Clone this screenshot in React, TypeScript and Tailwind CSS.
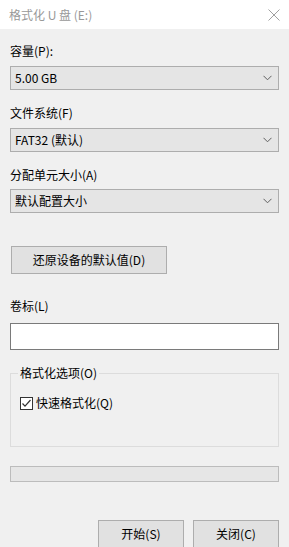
import { useState } from "react";

const FONT = { fontFamily: '"Noto Sans CJK SC", "Noto Sans", sans-serif' };

function Chevron() {
  return (
    <svg width="9" height="6" viewBox="0 0 9 6" fill="none" stroke="#606060" strokeWidth={1}>
      <polyline points="0.5,0.8 4.5,4.8 8.5,0.8" />
    </svg>
  );
}

function Combo({ value }: { value: string }) {
  return (
    <div className="flex h-[24px] items-center justify-between border border-[#adadad] bg-[#e5e5e5] pl-[4px] pr-[6px] text-[12px] text-black">
      <span>{value}</span>
      <Chevron />
    </div>
  );
}

export default function App() {
  const [quick, setQuick] = useState(true);

  return (
    <div className="flex h-[547px] w-[289px] flex-col overflow-hidden bg-[#f0f0f0] text-[12px] leading-[16px] text-black" style={FONT}>
      {/* Title bar */}
      <div className="flex h-[29px] shrink-0 items-center justify-between bg-white pl-[9px] pr-[9px]">
        <span className="text-[12px] text-[#999999]">格式化 U 盘 (E:)</span>
        <svg width="12" height="12" viewBox="0 0 12 12" stroke="#a0a0a0" strokeWidth={1}>
          <line x1="0.5" y1="0.5" x2="11.5" y2="11.5" />
          <line x1="11.5" y1="0.5" x2="0.5" y2="11.5" />
        </svg>
      </div>

      <div className="flex flex-col px-[10px] pt-[14px]">
        <label className="h-[16px]">容量(P):</label>
        <div className="mt-[7px]">
          <Combo value="5.00 GB" />
        </div>

        <label className="mt-[15px] h-[16px]">文件系统(F)</label>
        <div className="mt-[7px]">
          <Combo value="FAT32 (默认)" />
        </div>

        <label className="mt-[15px] h-[16px]">分配单元大小(A)</label>
        <div className="mt-[6px]">
          <Combo value="默认配置大小" />
        </div>

        <button className="mt-[33px] ml-[1px] h-[28px] w-[156px] self-start border border-[#adadad] bg-[#e1e1e1] text-[12px]">
          还原设备的默认值(D)
        </button>

        <label className="mt-[24px] h-[16px]">卷标(L)</label>
        <input className="mt-[9px] h-[27px] border border-[#7a7a7a] bg-white px-[3px] text-[12px] outline-none" />

        {/* Format options group */}
        <fieldset className="mt-[15px] h-[82px] border border-[#dcdcdc] px-[9px]">
          <legend className="ml-[-2px] px-[2px] leading-[16px]">格式化选项(O)</legend>
          <label className="mt-[14px] flex items-center gap-[3px]" onClick={() => setQuick(!quick)}>
            <span className="flex h-[13px] w-[13px] items-center justify-center border border-[#333333] bg-white">
              {quick && (
                <svg width="11" height="11" viewBox="0 0 11 11" fill="none" stroke="#333333" strokeWidth={1.2}>
                  <polyline points="1.5,5.5 4,8.2 9.5,2" />
                </svg>
              )}
            </span>
            <span>快速格式化(Q)</span>
          </label>
        </fieldset>

        <div className="mt-[19px] h-[16px] border border-[#bcbcbc] bg-[#e6e6e6]" />

        <div className="mt-[38px] flex justify-end gap-[9px]">
          <button className="h-[28px] w-[86px] border border-[#adadad] bg-[#e1e1e1] text-[12px]">开始(S)</button>
          <button className="h-[28px] w-[86px] border border-[#adadad] bg-[#e1e1e1] text-[12px]">关闭(C)</button>
        </div>
      </div>
    </div>
  );
}
